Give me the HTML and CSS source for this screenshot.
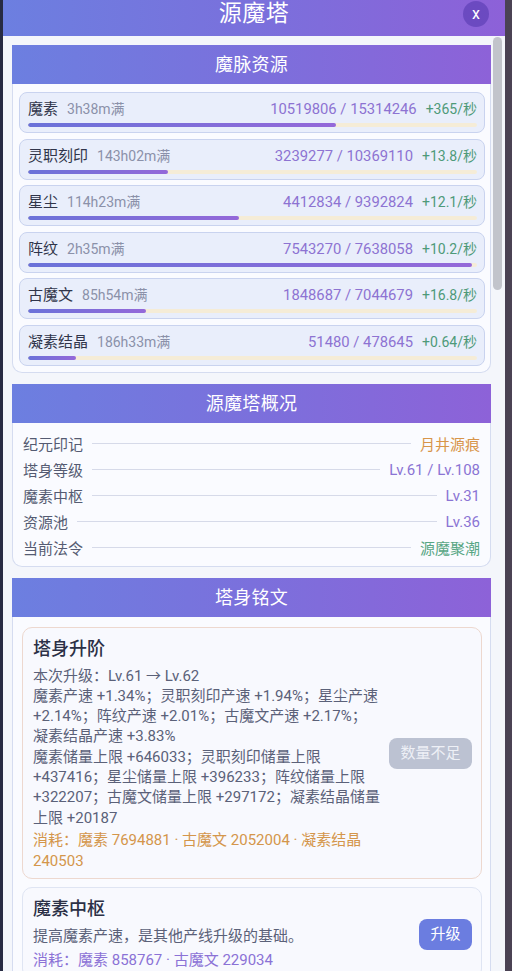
FILE: index.html
```html
<!DOCTYPE html>
<html lang="zh-CN">
<head>
<meta charset="utf-8">
<title>源魔塔</title>
<link rel="stylesheet" href="styles.css">
</head>
<body>
<div class="modal">
  <header class="modal-head">
    <h1 class="modal-title">源魔塔</h1>
    <button class="close-btn" type="button">x</button>
  </header>

  <div class="modal-body">
    <div class="scroll-content">
      <section class="panel">
        <h2 class="panel-head">魔脉资源</h2>
        <div class="panel-body res-list">
          <div class="res-row">
            <div class="res-top">
              <span class="res-name">魔素</span>
              <span class="res-eta">3h38m满</span>
              <span class="res-amount">10519806 / 15314246</span>
              <span class="res-rate">+365/秒</span>
            </div>
            <div class="bar"><div class="bar-fill" style="width:68.7%"></div></div>
          </div>
          <div class="res-row">
            <div class="res-top">
              <span class="res-name">灵职刻印</span>
              <span class="res-eta">143h02m满</span>
              <span class="res-amount">3239277 / 10369110</span>
              <span class="res-rate">+13.8/秒</span>
            </div>
            <div class="bar"><div class="bar-fill" style="width:31.2%"></div></div>
          </div>
          <div class="res-row">
            <div class="res-top">
              <span class="res-name">星尘</span>
              <span class="res-eta">114h23m满</span>
              <span class="res-amount">4412834 / 9392824</span>
              <span class="res-rate">+12.1/秒</span>
            </div>
            <div class="bar"><div class="bar-fill" style="width:47%"></div></div>
          </div>
          <div class="res-row">
            <div class="res-top">
              <span class="res-name">阵纹</span>
              <span class="res-eta">2h35m满</span>
              <span class="res-amount">7543270 / 7638058</span>
              <span class="res-rate">+10.2/秒</span>
            </div>
            <div class="bar"><div class="bar-fill" style="width:98.8%"></div></div>
          </div>
          <div class="res-row">
            <div class="res-top">
              <span class="res-name">古魔文</span>
              <span class="res-eta">85h54m满</span>
              <span class="res-amount">1848687 / 7044679</span>
              <span class="res-rate">+16.8/秒</span>
            </div>
            <div class="bar"><div class="bar-fill" style="width:26.2%"></div></div>
          </div>
          <div class="res-row">
            <div class="res-top">
              <span class="res-name">凝素结晶</span>
              <span class="res-eta">186h33m满</span>
              <span class="res-amount">51480 / 478645</span>
              <span class="res-rate">+0.64/秒</span>
            </div>
            <div class="bar"><div class="bar-fill" style="width:10.8%"></div></div>
          </div>
        </div>
      </section>

      <section class="panel">
        <h2 class="panel-head">源魔塔概况</h2>
        <div class="panel-body stat-list">
          <div class="stat-row"><span class="stat-label">纪元印记</span><span class="stat-line"></span><span class="stat-value v-orange">月井源痕</span></div>
          <div class="stat-row"><span class="stat-label">塔身等级</span><span class="stat-line"></span><span class="stat-value v-purple">Lv.61 / Lv.108</span></div>
          <div class="stat-row"><span class="stat-label">魔素中枢</span><span class="stat-line"></span><span class="stat-value v-purple">Lv.31</span></div>
          <div class="stat-row"><span class="stat-label">资源池</span><span class="stat-line"></span><span class="stat-value v-purple">Lv.36</span></div>
          <div class="stat-row"><span class="stat-label">当前法令</span><span class="stat-line"></span><span class="stat-value v-green">源魔聚潮</span></div>
        </div>
      </section>

      <section class="panel">
        <h2 class="panel-head">塔身铭文</h2>
        <div class="panel-body up-list">
          <article class="up-card up-card--warn">
            <div class="up-info">
              <h3 class="up-title">塔身升阶</h3>
              <p class="up-text">本次升级：Lv.61 → Lv.62</p>
              <p class="up-text">魔素产速 +1.34%；灵职刻印产速 +1.94%；星尘产速 +2.14%；阵纹产速 +2.01%；古魔文产速 +2.17%；<br>凝素结晶产速 +3.83%</p>
              <p class="up-text">魔素储量上限 +646033；灵职刻印储量上限 +437416；星尘储量上限 +396233；阵纹储量上限 +322207；古魔文储量上限 +297172；凝素结晶储量上限 +20187</p>
              <p class="up-cost cost-orange">消耗：魔素 7694881 · 古魔文 2052004 · 凝素结晶 240503</p>
            </div>
            <button class="up-btn up-btn--off" type="button">数量不足</button>
          </article>

          <article class="up-card">
            <div class="up-info">
              <h3 class="up-title">魔素中枢</h3>
              <p class="up-text up-desc">提高魔素产速，是其他产线升级的基础。</p>
              <p class="up-cost cost-purple">消耗：魔素 858767 · 古魔文 229034</p>
            </div>
            <button class="up-btn" type="button">升级</button>
          </article>

          <article class="up-card">
            <div class="up-info">
              <h3 class="up-title">资源池</h3>
              <p class="up-text up-desc">提高全部资源的储量上限。</p>
              <p class="up-cost cost-purple">消耗：魔素 912406 · 阵纹 318552</p>
            </div>
            <button class="up-btn" type="button">升级</button>
          </article>
        </div>
      </section>
    </div>

    <div class="scroll-rail" aria-hidden="true">
      <div class="scroll-thumb"></div>
    </div>
  </div>
</div>
</body>
</html>
```

FILE: styles.css
```css
* {
  box-sizing: border-box;
  margin: 0;
  padding: 0;
}

html,
body {
  height: 100%;
}

body {
  background: linear-gradient(90deg, #272b42 0%, #2c2f47 40%, #4b4253 100%);
  font-family: Roboto, "Noto Sans CJK SC", sans-serif;
  overflow: hidden;
}

.modal {
  margin-left: 3px;
  width: 502px;
  height: 100vh;
  display: flex;
  flex-direction: column;
  background: #f4f6fb;
}

/* ---------- header ---------- */
.modal-head {
  flex: none;
  height: 36px;
  background: linear-gradient(90deg, #6c7fe0 0%, #7a70dc 50%, #8d61d8 100%);
  display: grid;
  grid-template-columns: 1fr auto 1fr;
  align-items: start;
}

.modal-title {
  grid-column: 2;
  color: #fff;
  font-size: 23px;
  font-weight: 400;
  line-height: 28px;
  letter-spacing: 0.5px;
}

.close-btn {
  grid-column: 3;
  justify-self: end;
  margin: 1px 16px 0 0;
  width: 26px;
  height: 26px;
  border: 0;
  border-radius: 50%;
  background: rgba(86, 58, 176, 0.6);
  color: #fff;
  font-family: inherit;
  font-size: 16px;
  line-height: 26px;
  cursor: pointer;
}

/* ---------- scroll body ---------- */
.modal-body {
  flex: 1;
  min-height: 0;
  display: flex;
}

.scroll-content {
  flex: 1;
  min-width: 0;
  overflow-y: auto;
  scrollbar-width: none;
  padding: 9px 1px 12px 9px;
  display: flex;
  flex-direction: column;
  gap: 11px;
}

.scroll-rail {
  flex: none;
  width: 13px;
  padding: 1px 3px 0 1px;
}

.scroll-thumb {
  height: 253px;
  border-radius: 5px;
  background: #c2c4cb;
}

/* ---------- panels ---------- */
.panel {
  flex: none;
}

.panel-head {
  height: 39px;
  background: linear-gradient(90deg, #6c7fe0 0%, #7b70dc 50%, #8d62d8 100%);
  color: #fff;
  font-size: 18px;
  font-weight: 400;
  line-height: 39px;
  text-align: center;
  letter-spacing: 0.3px;
}

.panel-body {
  background: #fafbff;
  border: 1px solid #d5dcf0;
  border-top: 0;
  border-radius: 0 0 10px 10px;
}

/* ---------- resources ---------- */
.res-list {
  padding: 8px 5px 6px 6px;
  display: flex;
  flex-direction: column;
  gap: 5.5px;
}

.res-row {
  height: 41px;
  background: #e9eefb;
  border: 1px solid #c9d3ef;
  border-radius: 8px;
  padding: 6px 7px 0 8px;
}

.res-top {
  display: flex;
  align-items: center;
  height: 20px;
  white-space: nowrap;
}

.res-name {
  font-size: 15px;
  color: #30354a;
  line-height: 20px;
}

.res-eta {
  margin-left: 9px;
  font-size: 14px;
  color: #8b91a9;
  line-height: 20px;
}

.res-amount {
  margin-left: auto;
  font-size: 14.8px;
  color: #8d73d2;
  line-height: 20px;
}

.res-rate {
  margin-left: 9px;
  font-size: 14px;
  color: #4e9a79;
  line-height: 20px;
}

.bar {
  margin-top: 4px;
  height: 4px;
  border-radius: 2px;
  background: #f5ecd7;
  overflow: hidden;
}

.bar-fill {
  height: 100%;
  border-radius: 2px;
  background: linear-gradient(90deg, #6a72d9, #9468d9);
}

/* ---------- overview ---------- */
.stat-list {
  padding: 8px 10px 5px 10px;
}

.stat-row {
  display: flex;
  align-items: center;
  height: 26px;
  font-size: 15px;
  white-space: nowrap;
}

.stat-label {
  color: #555b72;
}

.stat-line {
  flex: 1;
  height: 1px;
  margin: 0 9px;
  background: #d6dae9;
}

.stat-value {
  font-size: 15px;
}

.v-orange { color: #d8954a; }
.v-purple { color: #8a74d4; }
.v-green  { color: #58a684; }

/* ---------- upgrade cards ---------- */
.up-list {
  padding: 10px 8px 10px 9px;
  display: flex;
  flex-direction: column;
  gap: 8px;
}

.up-card {
  display: flex;
  align-items: center;
  gap: 8px;
  background: #f8f9fe;
  border: 1px solid #dfe5f3;
  border-radius: 10px;
  padding: 9px 9px 7px 10px;
}

.up-card--warn {
  border-color: #edd8cf;
}

.up-info {
  flex: 1;
  min-width: 0;
}

.up-title {
  font-size: 18px;
  font-weight: 500;
  line-height: 24px;
  color: #2b3046;
  margin-bottom: 5px;
}

.up-text {
  font-size: 15px;
  line-height: 20.3px;
  color: #5b6179;
}

.up-desc {
  margin-bottom: 3px;
}

.up-cost {
  margin-top: 2px;
  font-size: 15px;
  line-height: 20.8px;
}

.cost-orange { color: #d4964b; }
.cost-purple { color: #8b72d6; }

.up-btn {
  flex: none;
  border: 0;
  border-radius: 8px;
  padding: 5px 11.5px;
  font-family: inherit;
  font-size: 15px;
  line-height: 21px;
  color: #fff;
  background: #6b7de0;
  cursor: pointer;
}

.up-btn--off {
  background: #bcc2d2;
  color: #eef0f6;
  cursor: default;
}
```
